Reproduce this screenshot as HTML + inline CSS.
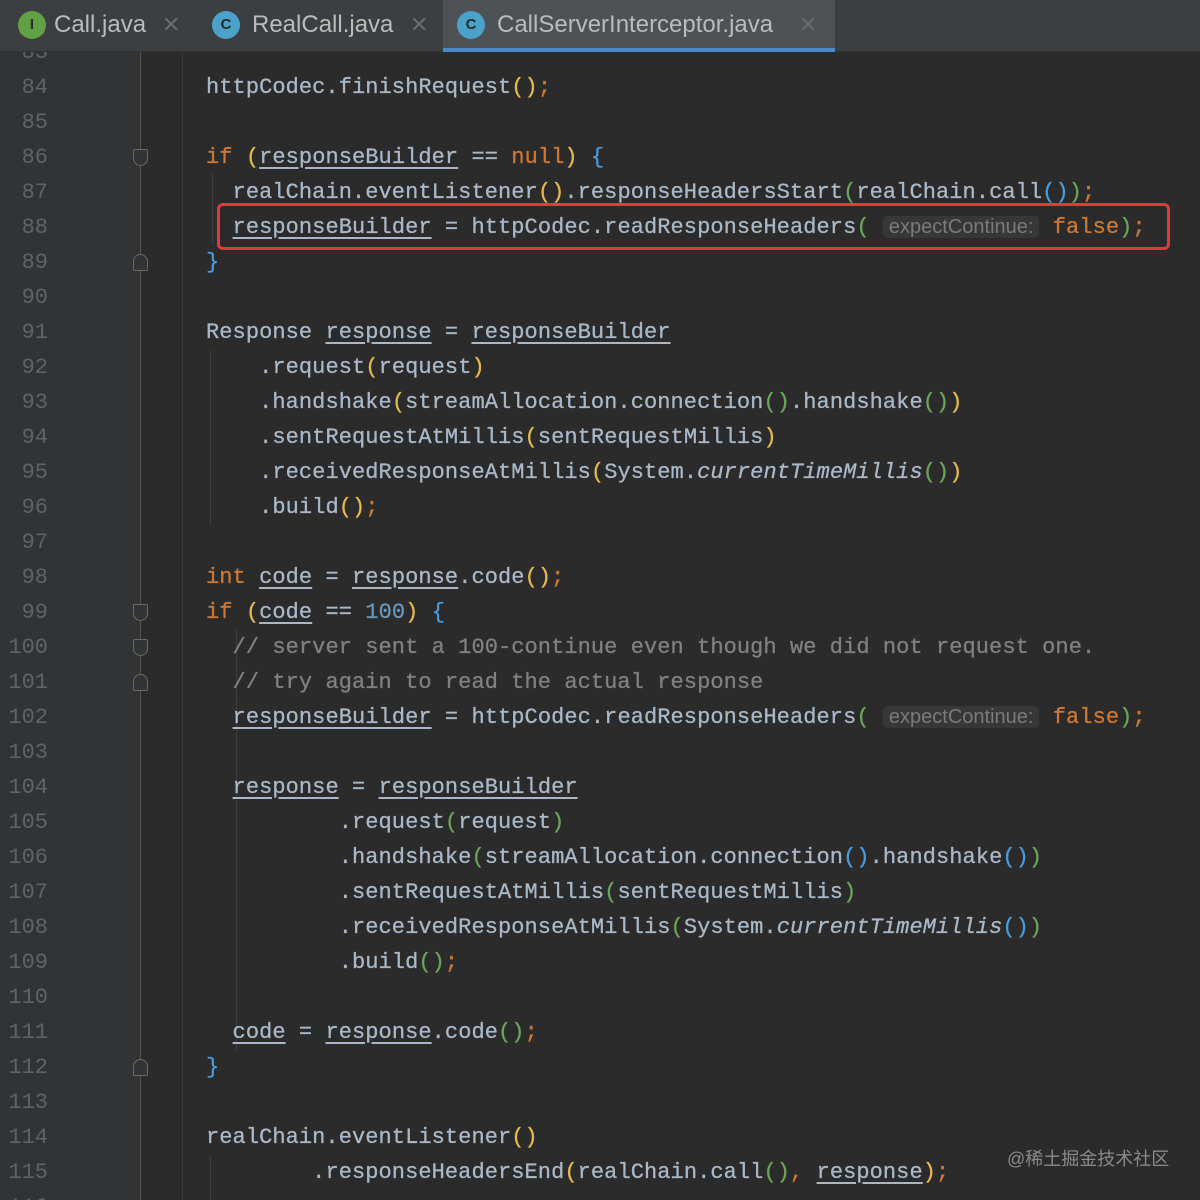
<!DOCTYPE html>
<html style="width:1200px;height:1200px;overflow:hidden"><head><meta charset="utf-8"><style>
*{margin:0;padding:0;box-sizing:border-box}
body{width:1200px;height:1200px;background:#2b2b2b;overflow:hidden;position:relative;font-family:"Liberation Mono",monospace;}
#tabs{position:absolute;left:0;top:0;width:1200px;height:52px;background:#3c3f41;border-bottom:1px solid #323232;z-index:2}
.tab{position:absolute;top:0;height:52px;font-family:"Liberation Sans",sans-serif;font-size:24px;color:#bbbbbb;line-height:50px}
.tab .ic{position:absolute;top:11px;width:28px;height:28px;border-radius:50%;font-size:15px;line-height:28px;text-align:center;color:#2b2b2b;font-weight:bold}
.tab .x{color:#6a6a6a;font-size:22px}
#gut{position:absolute;left:0;top:52px;width:140px;height:1148px;background:#313335}
#gl{position:absolute;left:140px;top:52px;width:1px;height:1148px;background:#555}
#gl2{position:absolute;left:182px;top:52px;width:1px;height:1148px;background:#3a3a3a}
.ln{position:absolute;left:0;width:48px;text-align:right;font-size:22px;color:#606366;height:35px;line-height:35px}
.l{position:absolute;left:206px;font-size:22px;line-height:35px;height:35px;color:#a9b7c6;white-space:pre;letter-spacing:0.07px;-webkit-text-stroke:0.3px}
.k{color:#cc7832}.n{color:#6897bb}.c{color:#808080}
.y{color:#e4b84f}.g{color:#6aa35b}.b{color:#4b9bdc}
.u{text-decoration:underline;text-decoration-color:#a9b7c6;text-underline-offset:4px}
.i{font-style:italic}
.h{font-family:"Liberation Sans",sans-serif;font-size:20px;color:#7a7a7a;background:#363738;border-radius:5px;padding:0 6px;letter-spacing:0;-webkit-text-stroke:0}
.fold{position:absolute;left:133px;width:15px;height:17px;border:1.5px solid #6a6a6a;background:#313335}
.guide{position:absolute;width:1px;background:#3d3d3d}
#wrap{position:absolute;left:0;top:2px;width:1200px;height:1198px;overflow:hidden}
</style></head><body>
<div id="tabs">
 <div class="tab" style="left:18px"><span class="ic" style="left:0;background:#62a046">I</span><span style="position:absolute;left:36px">Call.java</span><span class="x" style="position:absolute;left:144px">✕</span></div>
 <div class="tab" style="left:212px"><span class="ic" style="left:0;background:#4aa1c9">C</span><span style="position:absolute;left:40px;width:180px">RealCall.java</span><span class="x" style="position:absolute;left:198px">✕</span></div>
 <div class="tab" style="left:443px;width:392px;background:#4e5254;border-bottom:4px solid #4a88c7"><span class="ic" style="left:14px;background:#4aa1c9">C</span><span style="position:absolute;left:54px;width:300px">CallServerInterceptor.java</span><span class="x" style="position:absolute;left:356px">✕</span></div>
</div>
<div id="gut"></div><div id="gl"></div><div id="gl2"></div>
<div id="wrap">
<div class="guide" style="left:212px;top:172px;height:70px"></div>
<div class="guide" style="left:210px;top:348px;height:175px"></div>
<div class="guide" style="left:236px;top:628px;height:420px"></div>
<div class="guide" style="left:210px;top:1155px;height:45px"></div>
<div class="fold" style="top:147px;border-radius:2px 2px 8px 8px"></div>
<div class="fold" style="top:252px;border-radius:8px 8px 2px 2px"></div>
<div class="fold" style="top:602px;border-radius:2px 2px 8px 8px"></div>
<div class="fold" style="top:637px;border-radius:2px 2px 8px 8px"></div>
<div class="fold" style="top:672px;border-radius:8px 8px 2px 2px"></div>
<div class="fold" style="top:1057px;border-radius:8px 8px 2px 2px"></div>

<div class="ln" style="top:33px">83</div>
<div class="ln" style="top:68px">84</div><div class="ln" style="top:103px">85</div><div class="ln" style="top:138px">86</div><div class="ln" style="top:173px">87</div><div class="ln" style="top:208px">88</div><div class="ln" style="top:243px">89</div><div class="ln" style="top:278px">90</div><div class="ln" style="top:313px">91</div><div class="ln" style="top:348px">92</div><div class="ln" style="top:383px">93</div><div class="ln" style="top:418px">94</div><div class="ln" style="top:453px">95</div><div class="ln" style="top:488px">96</div><div class="ln" style="top:523px">97</div><div class="ln" style="top:558px">98</div><div class="ln" style="top:593px">99</div><div class="ln" style="top:628px">100</div><div class="ln" style="top:663px">101</div><div class="ln" style="top:698px">102</div><div class="ln" style="top:733px">103</div><div class="ln" style="top:768px">104</div><div class="ln" style="top:803px">105</div><div class="ln" style="top:838px">106</div><div class="ln" style="top:873px">107</div><div class="ln" style="top:908px">108</div><div class="ln" style="top:943px">109</div><div class="ln" style="top:978px">110</div><div class="ln" style="top:1013px">111</div><div class="ln" style="top:1048px">112</div><div class="ln" style="top:1083px">113</div><div class="ln" style="top:1118px">114</div><div class="ln" style="top:1153px">115</div><div class="ln" style="top:1188px">116</div>
<div style="position:absolute;left:0;top:0;width:140px;height:16px;background:#313335"></div>

<div class="l" style="top:68px">httpCodec.finishRequest<span class="y">()</span><span class="k">;</span></div>
<div class="l" style="top:138px"><span class="k">if </span><span class="y">(</span><span class="u">responseBuilder</span> == <span class="k">null</span><span class="y">)</span> <span class="b">{</span></div>
<div class="l" style="top:173px">  realChain.eventListener<span class="y">()</span>.responseHeadersStart<span class="g">(</span>realChain.call<span class="b">()</span><span class="g">)</span><span class="k">;</span></div>
<div class="l" style="top:208px">  <span class="u">responseBuilder</span> = httpCodec.readResponseHeaders<span class="g">(</span> <span class="h">expectContinue:</span> <span class="k">false</span><span class="g">)</span><span class="k">;</span></div>
<div style="position:absolute;left:217px;top:201px;width:953px;height:47px;border:3px solid #e0393e;border-radius:6px"></div>
<div class="l" style="top:243px"><span class="b">}</span></div>
<div class="l" style="top:313px">Response <span class="u">response</span> = <span class="u">responseBuilder</span></div>
<div class="l" style="top:348px">    .request<span class="y">(</span>request<span class="y">)</span></div>
<div class="l" style="top:383px">    .handshake<span class="y">(</span>streamAllocation.connection<span class="g">()</span>.handshake<span class="g">()</span><span class="y">)</span></div>
<div class="l" style="top:418px">    .sentRequestAtMillis<span class="y">(</span>sentRequestMillis<span class="y">)</span></div>
<div class="l" style="top:453px">    .receivedResponseAtMillis<span class="y">(</span>System.<span class="i">currentTimeMillis</span><span class="g">()</span><span class="y">)</span></div>
<div class="l" style="top:488px">    .build<span class="y">()</span><span class="k">;</span></div>
<div class="l" style="top:558px"><span class="k">int </span><span class="u">code</span> = <span class="u">response</span>.code<span class="y">()</span><span class="k">;</span></div>
<div class="l" style="top:593px"><span class="k">if </span><span class="y">(</span><span class="u">code</span> == <span class="n">100</span><span class="y">)</span> <span class="b">{</span></div>
<div class="l c" style="top:628px">  // server sent a 100-continue even though we did not request one.</div>
<div class="l c" style="top:663px">  // try again to read the actual response</div>
<div class="l" style="top:698px">  <span class="u">responseBuilder</span> = httpCodec.readResponseHeaders<span class="g">(</span> <span class="h">expectContinue:</span> <span class="k">false</span><span class="g">)</span><span class="k">;</span></div>
<div class="l" style="top:768px">  <span class="u">response</span> = <span class="u">responseBuilder</span></div>
<div class="l" style="top:803px">          .request<span class="g">(</span>request<span class="g">)</span></div>
<div class="l" style="top:838px">          .handshake<span class="g">(</span>streamAllocation.connection<span class="b">()</span>.handshake<span class="b">()</span><span class="g">)</span></div>
<div class="l" style="top:873px">          .sentRequestAtMillis<span class="g">(</span>sentRequestMillis<span class="g">)</span></div>
<div class="l" style="top:908px">          .receivedResponseAtMillis<span class="g">(</span>System.<span class="i">currentTimeMillis</span><span class="b">()</span><span class="g">)</span></div>
<div class="l" style="top:943px">          .build<span class="g">()</span><span class="k">;</span></div>
<div class="l" style="top:1013px">  <span class="u">code</span> = <span class="u">response</span>.code<span class="g">()</span><span class="k">;</span></div>
<div class="l" style="top:1048px"><span class="b">}</span></div>
<div class="l" style="top:1118px">realChain.eventListener<span class="y">()</span></div>
<div class="l" style="top:1153px">        .responseHeadersEnd<span class="y">(</span>realChain.call<span class="g">()</span><span class="k">, </span><span class="u">response</span><span class="y">)</span><span class="k">;</span></div>
<div style="position:absolute;left:1007px;top:1143px;font-family:'Liberation Sans','Noto Sans CJK SC',sans-serif;font-size:18px;color:#8a8a8a">@稀土掘金技术社区</div>
</div>
</body></html>
